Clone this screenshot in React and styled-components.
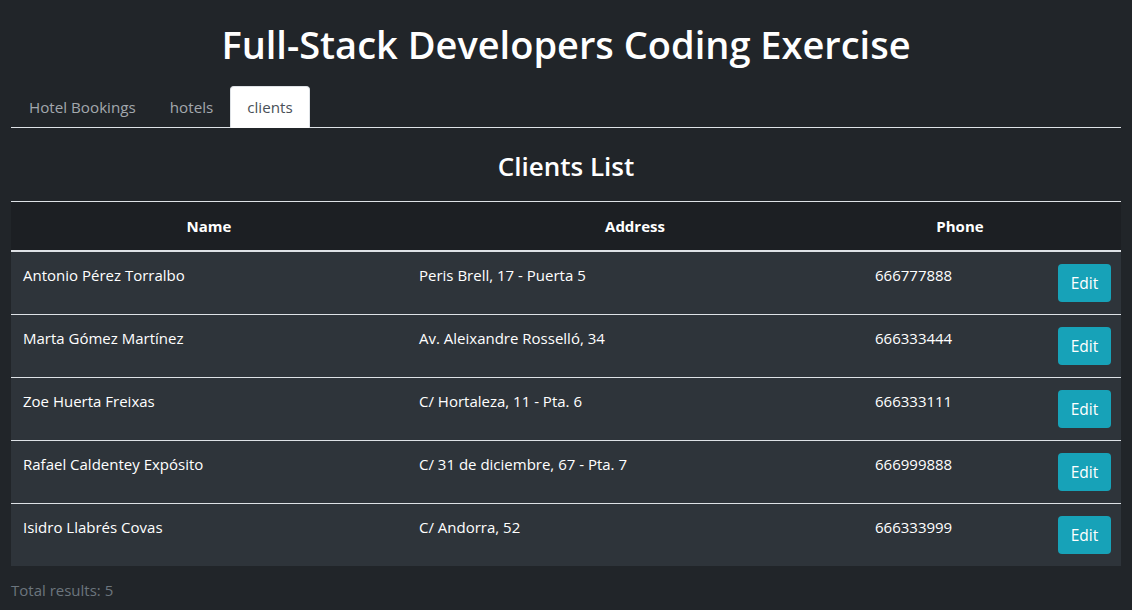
import React from "react";
import styled, { createGlobalStyle } from "styled-components";

const Global = createGlobalStyle`
  html, body { margin: 0; padding: 0; background: #212529; }
  body { font-family: "Open Sans", "Noto Sans", sans-serif; color: #fff; font-size: 16px; line-height: 1.5; }
  * { box-sizing: border-box; }
`;

const Page = styled.div`
  padding: 0 11px;
`;

const Title = styled.h1`
  margin: 0;
  padding-top: 19px;
  height: 86px;
  text-align: center;
  font-size: 38px;
  font-weight: 600;
  line-height: 50px;
  color: #fff;
`;

const Tabs = styled.ul`
  display: flex;
  list-style: none;
  margin: 0;
  padding: 0 0 0 1px;
  border-bottom: 1px solid #dee2e6;
`;

const Tab = styled.li`
  height: 42px;
  margin-bottom: -1px;
  padding: 0 16px;
  display: flex;
  align-items: center;
  font-size: 15.2px;
  border: 1px solid ${(p) => (p.$active ? "#dee2e6" : "transparent")};
  border-bottom-color: ${(p) => (p.$active ? "#fff" : "transparent")};
  border-radius: 4px 4px 0 0;
  background: ${(p) => (p.$active ? "#fff" : "transparent")};
  color: ${(p) => (p.$active ? "#495057" : "#a3a8ad")};
  cursor: pointer;
`;

const SubTitle = styled.h2`
  margin: 0;
  height: 73px;
  display: flex;
  align-items: center;
  justify-content: center;
  padding-top: 3px;
  font-size: 26px;
  font-weight: 600;
  color: #fff;
`;

const Table = styled.table`
  width: 100%;
  border-collapse: collapse;
  table-layout: fixed;
  font-size: 15px;
`;

const Th = styled.th`
  background: #1c1f23;
  height: 49px;
  text-align: center;
  font-weight: 700;
  font-size: 15px;
  border-top: 1px solid #dee2e6;
  border-bottom: 2px solid #dee2e6;
  padding: 0 12px;
`;

const Row = styled.tr`
  background: #2e343a;
  border-top: 1px solid #dee2e6;
  &:first-child { border-top: none; }
`;

const Td = styled.td`
  padding: 12px;
  vertical-align: top;
  height: 63px;
  color: #fff;
`;

const EditButton = styled.button`
  font-family: inherit;
  font-size: 15.5px;
  height: 38px;
  width: 53px;
  line-height: 24px;
  padding: 0;
  border: none;
  border-radius: 4px;
  background: #17a2b8;
  color: #fff;
  cursor: pointer;
  margin-left: -11px;
`;

const Footer = styled.div`
  padding-top: 13px;
  color: #6c757d;
  font-size: 15px;
`;

const clients = [
  ["Antonio Pérez Torralbo", "Peris Brell, 17 - Puerta 5", "666777888"],
  ["Marta Gómez Martínez", "Av. Aleixandre Rosselló, 34", "666333444"],
  ["Zoe Huerta Freixas", "C/ Hortaleza, 11 - Pta. 6", "666333111"],
  ["Rafael Caldentey Expósito", "C/ 31 de diciembre, 67 - Pta. 7", "666999888"],
  ["Isidro Llabrés Covas", "C/ Andorra, 52", "666333999"],
];

export default function App() {
  return (
    <Page>
      <Global />
      <Title>Full-Stack Developers Coding Exercise</Title>
      <Tabs>
        <Tab>Hotel Bookings</Tab>
        <Tab>hotels</Tab>
        <Tab $active>clients</Tab>
      </Tabs>
      <SubTitle>Clients List</SubTitle>
      <Table>
        <colgroup>
          <col style={{ width: 396 }} />
          <col style={{ width: 456 }} />
          <col style={{ width: 194 }} />
          <col style={{ width: 64 }} />
        </colgroup>
        <thead>
          <tr>
            <Th>Name</Th>
            <Th>Address</Th>
            <Th>Phone</Th>
            <Th />
          </tr>
        </thead>
        <tbody>
          {clients.map(([n, a, p]) => (
            <Row key={n}>
              <Td>{n}</Td>
              <Td>{a}</Td>
              <Td>{p}</Td>
              <Td>
                <EditButton>Edit</EditButton>
              </Td>
            </Row>
          ))}
        </tbody>
      </Table>
      <Footer>Total results: 5</Footer>
    </Page>
  );
}
